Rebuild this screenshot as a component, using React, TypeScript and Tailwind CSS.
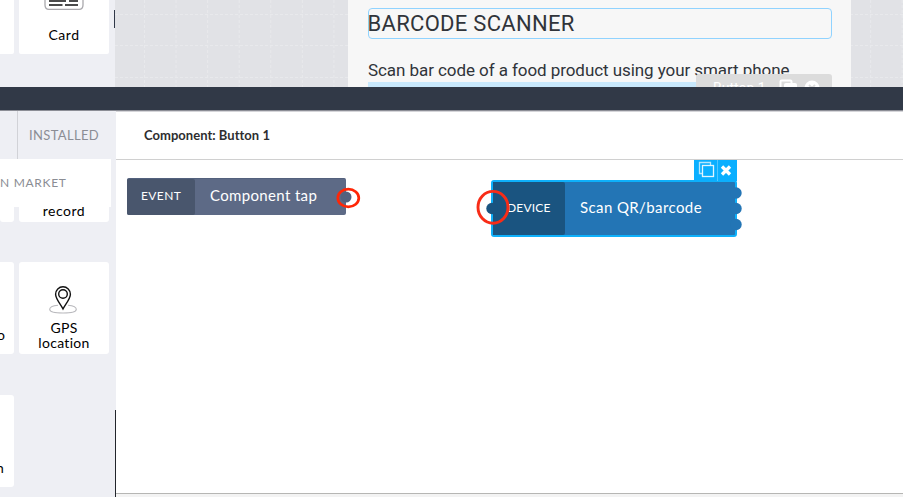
import React from "react";

const gridLines = Array.from({ length: 26 }, (_, i) => 29.5 + i * 31.57);

function CanvasGrid() {
  return (
    <svg className="absolute inset-0 h-full w-full" stroke="#e8e9ec" strokeWidth="1" strokeDasharray="3 2">
      {gridLines.map((x) => (
        <line key={x} x1={x} x2={x} y1="0" y2="87" />
      ))}
      {[14.5, 45.5, 77.5].map((y) => (
        <line key={y} x1="0" x2="788" y1={y} y2={y} />
      ))}
    </svg>
  );
}

function CardIcon() {
  return (
    <svg className="mx-auto block" width="40" height="10" viewBox="0 0 40 10" fill="none">
      <path d="M1 -4V5Q1 9.3 5 9.3H35Q39 9.3 39 5V-4" stroke="#aaa9ad" strokeWidth="1.3" />
      <path d="M5 1H22M25 1H34M5 5H18.500M21 5H34" stroke="#111" strokeWidth="1.6" />
    </svg>
  );
}

function PinIcon() {
  return (
    <svg className="mr-auto ml-[30px] block" width="28" height="28" viewBox="0 0 28 28" fill="none">
      <path d="M9 19.2C4 19.700 0.700 21.200 .7 23.200C.7 25.600 6.500 27 14 27S27.300 25.600 27.300 23.200C27.300 21.200 24 19.700 19 19.200" stroke="#b9b9bd" strokeWidth="1.1" />
      <path d="M14 23C11.700 18.500 6.600 12.700 6.600 8.200A7.400 7.400 0 0 1 21.400 8.200C21.400 12.700 16.300 18.500 14 23Z" stroke="#111" strokeWidth="1.4" />
      <circle cx="14" cy="8" r="4.300" stroke="#111" strokeWidth="1.4" />
    </svg>
  );
}

function TopPane() {
  return (
    <div className="flex h-[87px] shrink-0 overflow-hidden">
      <aside className="flex w-[115px] shrink-0 items-start bg-[#eeeff4]">
        <div className="h-[54px] w-[14px] rounded-br-[2px] bg-white" />
        <div className="ml-[5px] h-[54px] w-[90px] rounded-b-[2px] bg-white">
          <CardIcon />
          <div className="mt-[15px] text-center text-[14px] leading-[20px] tracking-[0.5px] text-black">Card</div>
        </div>
        <div className="mt-[10px] ml-[5px] h-[18px] w-px bg-[#303848]" />
      </aside>
      <div className="relative flex-1 bg-[#e1e2e6]">
        <CanvasGrid />
        <div className="relative ml-[233px] h-full w-[503px] bg-[#f7f7f7] px-[20px] pt-[8px] font-[Roboto,sans-serif] text-[#30343a]">
          <h1 className="h-[31px] w-[464px] rounded-[4px] border border-[#90d3ff] text-[22px] leading-[30px] font-normal tracking-[0.3px] whitespace-nowrap">
            <span className="-ml-[1.500px]">BARCODE SCANNER</span>
          </h1>
          <p className="mt-[20px] h-[23px] text-[17px] leading-[22px] tracking-[-0.07px] whitespace-nowrap">
            Scan bar code of a food product using your smart phone.
          </p>
          <div className="h-[5px] bg-[#c8e8fc]" />
          <div className="absolute top-[74px] left-[348px] flex h-[13px] w-[136px] items-start overflow-hidden rounded-t-[3px] bg-[#dcdcdc] text-white">
            <span className="mt-[5px] ml-[17px] w-[66px] text-[14px] leading-[18px] whitespace-nowrap">Button 1</span>
            <svg width="44" height="18" viewBox="0 0 44 18" fill="none">
              <rect x="1.500" y="6.500" width="11" height="11" rx="1" stroke="#fff" strokeWidth="2" />
              <rect x="5" y="9" width="13" height="13" rx="2" fill="#fff" />
              <circle cx="33" cy="14" r="7.500" fill="#fff" />
              <path d="M30 11L36 17M36 11L30 17" stroke="#dcdcdc" strokeWidth="2" />
            </svg>
          </div>
        </div>
      </div>
    </div>
  );
}

function Sidebar() {
  return (
    <aside className="flex w-[116px] shrink-0 flex-col overflow-hidden bg-[#eeeff4]">
      <div className="flex h-[48px] shrink-0 text-[#8b8d94]">
        <div className="w-[17px] border-r border-[#d1d2d7] box-content" />
        <div className="pl-[11px] text-[13px] leading-[49px] tracking-[0.35px]">INSTALLED</div>
      </div>
      <div className="h-[48px] w-[111px] shrink-0 bg-white text-[12px] leading-[47px] tracking-[0.7px] whitespace-nowrap text-[#8b8d94]">
        N MARKET
      </div>
      <div className="flex h-[15px] shrink-0 gap-[5px]">
        <div className="w-[14px] rounded-b-[3px] bg-white" />
        <div className="w-[90px] overflow-hidden rounded-b-[3px] bg-white text-center text-[14px] leading-[20px] tracking-[0.5px] text-black">
          <div className="-mt-[6px]">record</div>
        </div>
      </div>
      <div className="mt-[40px] flex h-[92px] shrink-0 gap-[5px] text-[14px] leading-[14.500px] text-black">
        <div className="flex w-[14px] items-end overflow-hidden rounded-r-[3px] bg-white pb-[12px]">
          <span className="-ml-[3px]">o</span>
        </div>
        <div className="w-[90px] rounded-[3px] bg-white pt-[24px] text-center tracking-[0.3px]">
          <PinIcon />
          <div className="mt-[7px]">GPS<br />location</div>
        </div>
      </div>
      <div className="mt-[41px] flex h-[92px] w-[14px] shrink-0 items-end overflow-hidden rounded-r-[3px] bg-white pb-[12px] text-[14px] leading-[15px] text-black">
        <span className="-ml-[4px]">n</span>
      </div>
    </aside>
  );
}

function FlowCanvas() {
  return (
    <div className="relative flex-1">
      <div className="absolute top-[18px] left-[11px] flex h-[37px] w-[219px] overflow-hidden rounded-[2px] border-t border-[#53617d] bg-[#5d6a86] text-white">
        <div className="w-[68px] rounded-r-[2px] bg-[#49566d] pl-[14px] text-[12px] leading-[34px] tracking-[0.4px]">EVENT</div>
        <div className="pl-[15px] text-[15px] leading-[33px] tracking-[0.35px] whitespace-nowrap">Component tap</div>
      </div>
      <div className="absolute top-[20px] left-[375px] flex h-[57px] w-[246px] rounded-[3px] border-2 border-[#0eb0fa] bg-[#2375b5] text-white">
        <div className="w-[72px] rounded-r-[2px] bg-[#1a5480] pl-[14px] text-[12px] leading-[51px] tracking-[0.2px]">DEVICE</div>
        <div className="pl-[15px] text-[15px] leading-[51px] tracking-[0.4px] whitespace-nowrap">Scan QR/barcode</div>
      </div>
      <div className="absolute top-0 left-[578px] flex h-[21px] w-[43px] bg-[#0aafff]">
        <svg width="43" height="21" viewBox="0 0 43 21" fill="none">
          <path d="M9 13.500H5.500V2.500H16.500V6" stroke="#b7e6fc" strokeWidth="1.300" />
          <rect x="8.500" y="5.500" width="11" height="11" stroke="#e1f5ff" strokeWidth="1.300" />
          <path d="M23.500 0V21" stroke="#51c6ff" />
          <path d="M28 6.500L36 14.500M36 6.500L28 14.500" stroke="#fff" strokeWidth="3.300" />
        </svg>
      </div>
      <svg className="absolute inset-0 h-full w-full" fill="none">
        <circle cx="230" cy="37" r="5.500" fill="#53617d" />
        <circle cx="376" cy="48.500" r="5.700" fill="#1a5480" />
        {[33, 48.5, 64.5].map((y) => (
          <circle key={y} cx="620" cy={y} r="5.700" fill="#2375b5" />
        ))}
        <ellipse cx="232.300" cy="38" rx="10.500" ry="8.800" stroke="#ff2606" strokeWidth="2.700" />
        <ellipse cx="377" cy="47.300" rx="15" ry="15.900" stroke="#f82c17" strokeWidth="2.900" />
      </svg>
    </div>
  );
}

export default function App() {
  return (
    <div className="h-[498px] w-[904px] bg-white pr-px pb-px font-[Lato,sans-serif]">
      <div className="flex h-[497px] flex-col overflow-hidden">
        <TopPane />
        <div className="h-[23px] shrink-0 bg-[#313947]" />
        <div className="h-px shrink-0 bg-[#8c8e96]" />
        <div className="relative flex min-h-0 flex-1">
          <Sidebar />
          <div className="absolute top-[299px] bottom-0 left-[115px] w-px bg-[#22252b]" />
          <main className="flex flex-1 flex-col bg-white">
            <header className="h-[49px] shrink-0 border-t border-b border-t-[#d5d5d9] border-b-[#d0d0d0] pl-[28px] text-[13px] leading-[46px] font-bold tracking-[0.03px] text-[#2e2e30]">
              Component: Button 1
            </header>
            <FlowCanvas />
            <footer className="h-[4px] shrink-0 border-t border-[#b6b6b4] bg-[#f3f3f3]" />
          </main>
        </div>
      </div>
    </div>
  );
}
